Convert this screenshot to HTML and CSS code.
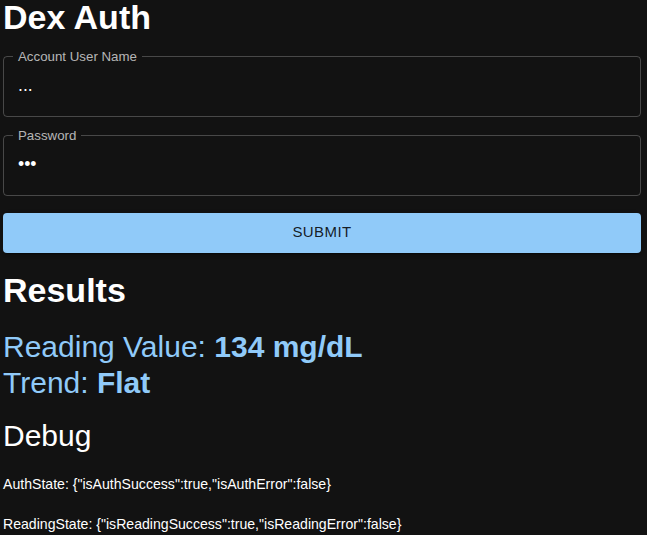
FILE: index.html
```html
<!DOCTYPE html>
<html lang="en">
<head>
<meta charset="utf-8">
<title>Dex Auth</title>
<link rel="stylesheet" href="styles.css">
</head>
<body>
<main class="page">
  <h1 class="title">Dex Auth</h1>
  <form class="form">
    <fieldset class="field">
      <legend class="field-label">Account User Name</legend>
      <input class="field-input" type="text" value="...">
    </fieldset>
    <fieldset class="field field-second">
      <legend class="field-label">Password</legend>
      <input class="field-input" type="password" value="abc">
    </fieldset>
    <button class="submit" type="button">Submit</button>
  </form>
  <h2 class="section-title">Results</h2>
  <p class="reading reading-first">Reading Value: <strong class="reading-value">134 mg/dL</strong></p>
  <p class="reading">Trend: <strong class="reading-value">Flat</strong></p>
  <h3 class="debug-title">Debug</h3>
  <p class="debug debug-first">AuthState: {"isAuthSuccess":true,"isAuthError":false}</p>
  <p class="debug">ReadingState: {"isReadingSuccess":true,"isReadingError":false}</p>
</main>
</body>
</html>
```
FILE: styles.css
```css
html, body {
  margin: 0;
  background: #121212;
}

body {
  color: #ffffff;
  font-family: "Liberation Sans", Arial, sans-serif;
}

.page {
  padding: 0 6px 0 3px;
}

.title {
  margin: 0;
  font-size: 34px;
  line-height: 34px;
  font-weight: 700;
}

.form {
  margin: 0;
}

.field {
  margin: 16px 0 0;
  padding: 0 9px;
  min-width: 0;
  border: 1px solid rgba(255, 255, 255, 0.23);
  border-radius: 4px;
}

.field-second {
  margin-top: 12px;
}

.field-label {
  padding: 0 5px;
  font-size: 13.3px;
  line-height: 13px;
  color: rgba(255, 255, 255, 0.7);
}

.field-input {
  display: block;
  width: 100%;
  box-sizing: border-box;
  height: 53px;
  margin: 0;
  padding: 11px 5px 19px;
  border: 0;
  background: transparent;
  color: #ffffff;
  font-family: inherit;
  font-size: 17.6px;
  line-height: 23px;
  outline: none;
}

.submit {
  display: block;
  box-sizing: border-box;
  width: 100%;
  height: 40px;
  margin: 17px 0 0;
  padding: 0 22px 4px;
  border: 0;
  border-radius: 4px;
  background: #90caf9;
  color: rgba(0, 0, 0, 0.87);
  font-family: inherit;
  font-size: 15px;
  font-weight: 400;
  letter-spacing: 0.43px;
  text-transform: uppercase;
  box-shadow: 0 3px 1px -2px rgba(0, 0, 0, 0.2), 0 2px 2px 0 rgba(0, 0, 0, 0.14), 0 1px 5px 0 rgba(0, 0, 0, 0.12);
}

.section-title {
  margin: 18px 0 0;
  font-size: 34px;
  line-height: 38px;
  font-weight: 700;
}

.reading {
  margin: 0;
  font-size: 30px;
  line-height: 36px;
  color: #90caf9;
}

.reading-first {
  margin-top: 20px;
}

.reading-value {
  font-weight: 700;
}

.debug-title {
  margin: 17px 0 0;
  font-size: 30px;
  line-height: 36px;
  font-weight: 400;
}

.debug {
  margin: 20px 0 0;
  font-size: 14.1px;
  line-height: 20px;
}

.debug-first {
  margin-top: 20px;
}
```
